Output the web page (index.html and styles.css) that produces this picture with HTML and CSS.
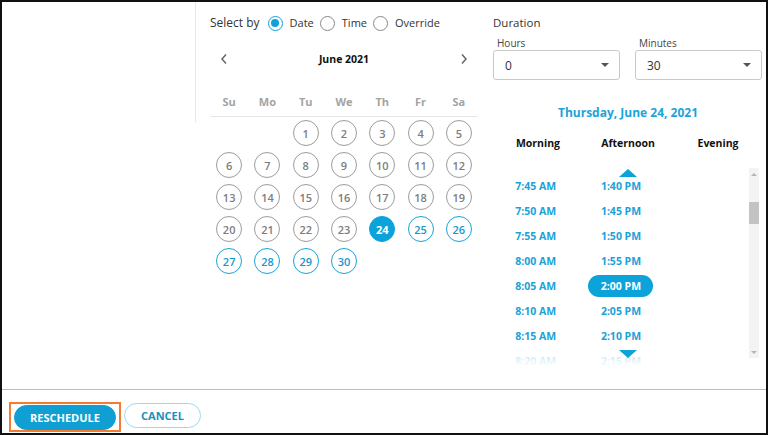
FILE: index.html
```html
<!DOCTYPE html>
<html lang="en">
<head>
<meta charset="utf-8">
<title>Reschedule</title>
<link rel="stylesheet" href="styles.css">
</head>
<body>
<div class="frame">
  <div class="main">
    <div class="side"></div>
    <div class="cal">
      <div class="select-by">
        <span class="sb-label">Select by</span>
        <span class="radio on"></span><span class="r-label">Date</span>
        <span class="radio"></span><span class="r-label">Time</span>
        <span class="radio"></span><span class="r-label">Override</span>
      </div>
      <div class="month">
        <svg class="chev" width="8" height="12" viewBox="0 0 8 12"><path d="M6 1.5 L2 6 L6 10.5" fill="none" stroke="#666" stroke-width="1.5"/></svg>
        <span class="month-title">June 2021</span>
        <svg class="chev" width="8" height="12" viewBox="0 0 8 12"><path d="M2 1.5 L6 6 L2 10.5" fill="none" stroke="#666" stroke-width="1.5"/></svg>
      </div>
      <div class="weekdays">
        <span>Su</span><span>Mo</span><span>Tu</span><span>We</span><span>Th</span><span>Fr</span><span>Sa</span>
      </div>
      <div class="days">
        <span class="day empty"></span><span class="day empty"></span>
        <span class="day"><i>1</i></span><span class="day"><i>2</i></span><span class="day"><i>3</i></span><span class="day"><i>4</i></span><span class="day"><i>5</i></span>
        <span class="day"><i>6</i></span><span class="day"><i>7</i></span><span class="day"><i>8</i></span><span class="day"><i>9</i></span><span class="day"><i>10</i></span><span class="day"><i>11</i></span><span class="day"><i>12</i></span>
        <span class="day"><i>13</i></span><span class="day"><i>14</i></span><span class="day"><i>15</i></span><span class="day"><i>16</i></span><span class="day"><i>17</i></span><span class="day"><i>18</i></span><span class="day"><i>19</i></span>
        <span class="day"><i>20</i></span><span class="day"><i>21</i></span><span class="day"><i>22</i></span><span class="day"><i>23</i></span><span class="day sel"><i>24</i></span><span class="day avail"><i>25</i></span><span class="day avail"><i>26</i></span>
        <span class="day avail"><i>27</i></span><span class="day avail"><i>28</i></span><span class="day avail"><i>29</i></span><span class="day avail"><i>30</i></span>
      </div>
    </div>
    <div class="right">
      <div class="dur-title">Duration</div>
      <div class="dur-fields">
        <div class="field">
          <div class="f-label">Hours</div>
          <div class="select"><span>0</span><span class="caret"></span></div>
        </div>
        <div class="field">
          <div class="f-label">Minutes</div>
          <div class="select"><span>30</span><span class="caret"></span></div>
        </div>
      </div>
      <div class="date-title">Thursday, June 24, 2021</div>
      <div class="periods"><span>Morning</span><span>Afternoon</span><span>Evening</span></div>
      <div class="slots">
        <div class="slot-list">
          <div class="slot-row"><span>7:45 AM</span><span>1:40 PM</span><span></span></div>
          <div class="slot-row"><span>7:50 AM</span><span>1:45 PM</span><span></span></div>
          <div class="slot-row"><span>7:55 AM</span><span>1:50 PM</span><span></span></div>
          <div class="slot-row"><span>8:00 AM</span><span>1:55 PM</span><span></span></div>
          <div class="slot-row"><span>8:05 AM</span><span class="pill">2:00 PM</span><span></span></div>
          <div class="slot-row"><span>8:10 AM</span><span>2:05 PM</span><span></span></div>
          <div class="slot-row"><span>8:15 AM</span><span>2:10 PM</span><span></span></div>
          <div class="slot-row last"><span>8:20 AM</span><span>2:15 PM</span><span></span></div>
          <div class="fade"></div>
        </div>
        <div class="scrollbar">
          <div class="sb-btn"><span class="sb-up"></span></div>
          <div class="sb-track"><div class="sb-thumb"></div></div>
          <div class="sb-btn"><span class="sb-down"></span></div>
        </div>
        <span class="arrow up"></span>
        <span class="arrow down"></span>
      </div>
    </div>
  </div>
  <div class="footer">
    <span class="focus-ring"><button class="btn primary">RESCHEDULE</button></span>
    <button class="btn secondary">CANCEL</button>
  </div>
</div>
</body>
</html>
```

FILE: styles.css
```css
* { box-sizing: border-box; }
html, body { margin: 0; padding: 0; background: #fff; }
body { font-family: "Open Sans", "Noto Sans", sans-serif; color: #333; }

.frame {
  width: 768px;
  height: 435px;
  border: 2px solid #111;
  display: flex;
  flex-direction: column;
  overflow: hidden;
}

.main {
  display: flex;
  height: 387px;
  flex: none;
}

.side {
  width: 194px;
  height: 120px;
  border-right: 1px solid #e8e8e8;
  flex: none;
}

.cal {
  width: 268px;
  margin-left: 14px;
  flex: none;
}

.select-by {
  margin-top: 12px;
  height: 18px;
  display: flex;
  align-items: center;
  font-size: 12px;
  line-height: 18px;
  color: #333;
}
.sb-label { margin-right: 8px; }
.radio {
  width: 15px;
  height: 15px;
  border: 1px solid #888;
  border-radius: 50%;
  margin-right: 7px;
  flex: none;
  display: inline-flex;
  align-items: center;
  justify-content: center;
}
.radio.on { border: 1.5px solid #0ea2d8; }
.radio.on::after {
  content: "";
  width: 8px;
  height: 8px;
  border-radius: 50%;
  background: #0ea2d8;
}
.r-label { margin-right: 6px; font-size: 11px; }

.month {
  margin-top: 15px;
  height: 24px;
  display: flex;
  align-items: center;
  justify-content: space-between;
  padding: 0 10px;
}
.month-title {
  font-size: 10.5px;
  font-weight: 700;
  color: #111;
}

.weekdays {
  margin-top: 21px;
  height: 25px;
  padding-bottom: 4px;
  border-bottom: 1px solid #e6e6e6;
  display: grid;
  grid-template-columns: repeat(7, 1fr);
  font-size: 11px;
  font-weight: 700;
  color: #a3a3a3;
  line-height: 20px;
  text-align: center;
}

.days {
  display: grid;
  grid-template-columns: repeat(7, 1fr);
  grid-auto-rows: 32px;
}
.day {
  display: flex;
  align-items: center;
  justify-content: center;
}
.day i {
  font-style: normal;
  width: 26px;
  height: 26px;
  border: 1px solid #9c9c9c;
  border-radius: 50%;
  display: flex;
  align-items: center;
  justify-content: center;
  font-size: 11px;
  font-weight: 600;
  color: #7d7d7d;
}
.day.avail i { border-color: #17a3d9; color: #1598cc; border-width: 1.3px; }
.day.sel i { background: #0ba3d9; border-color: #0ba3d9; color: #fff; font-weight: 700; }

.right {
  width: 270px;
  margin-left: 15px;
  flex: none;
}
.dur-title {
  margin-top: 11px;
  font-size: 11.5px;
  line-height: 20px;
  color: #333;
}
.dur-fields {
  display: flex;
  gap: 15px;
  margin-top: 3px;
}
.field { width: 127px; }
.f-label {
  font-size: 10px;
  line-height: 14px;
  padding-left: 4px;
  color: #444;
}
.select {
  height: 30px;
  border: 1px solid #c9c9c9;
  border-radius: 3px;
  display: flex;
  align-items: center;
  justify-content: space-between;
  padding: 0 10px 0 11px;
  font-size: 12px;
  color: #333;
}
.caret {
  width: 0;
  height: 0;
  border-left: 4px solid transparent;
  border-right: 4px solid transparent;
  border-top: 4px solid #555;
}

.date-title {
  margin-top: 24px;
  text-align: center;
  font-size: 12px;
  font-weight: 700;
  line-height: 18px;
  color: #1ba3da;
}
.periods {
  margin-top: 12px;
  display: grid;
  grid-template-columns: repeat(3, 1fr);
  text-align: center;
  font-size: 10.5px;
  font-weight: 700;
  line-height: 18px;
  color: #111;
}

.slots {
  position: relative;
  margin-top: 16px;
  height: 203px;
  display: flex;
  align-items: flex-start;
}
.slot-list {
  position: relative;
  width: 256px;
  height: 203px;
  overflow: hidden;
  padding-top: 5px;
}
.slot-row {
  display: grid;
  grid-template-columns: repeat(3, 1fr);
  height: 25px;
  align-items: center;
  justify-items: center;
  font-size: 10.5px;
  font-weight: 700;
  line-height: 14px;
  color: #1aa2d9;
}
.pill {
  width: 65px;
  height: 22px;
  border-radius: 11px;
  background: #0ba3d9;
  color: #fff;
  display: flex;
  align-items: center;
  justify-content: center;
}
.fade {
  position: absolute;
  left: 0;
  right: 0;
  bottom: 0;
  height: 30px;
  background: linear-gradient(rgba(255,255,255,0), rgba(255,255,255,0.8) 55%, #fff 85%);
}

.scrollbar {
  width: 10px;
  height: 190px;
  background: #f3f3f3;
  display: flex;
  flex-direction: column;
}
.sb-btn {
  height: 12px;
  display: flex;
  align-items: center;
  justify-content: center;
}
.sb-up, .sb-down {
  width: 0;
  height: 0;
  border-left: 3px solid transparent;
  border-right: 3px solid transparent;
}
.sb-up { border-bottom: 3px solid #b5b5b5; }
.sb-down { border-top: 3px solid #b5b5b5; }
.sb-track { flex: 1; }
.sb-thumb {
  margin-top: 22px;
  height: 22px;
  background: #c3c3c3;
}

.arrow {
  position: absolute;
  left: 126px;
  width: 0;
  height: 0;
  border-left: 9px solid transparent;
  border-right: 9px solid transparent;
}
.arrow.up { top: 1px; border-bottom: 8px solid #0ba3d9; }
.arrow.down { top: 182px; border-top: 8px solid #0ba3d9; }

.footer {
  flex: 1;
  border-top: 1px solid #86cfea;
  padding: 12px 0 0 7px;
  display: flex;
  align-items: flex-start;
  gap: 3px;
}
.focus-ring {
  display: inline-flex;
  border: 2px solid #f47b2f;
  padding: 1px 3px 0;
}
.btn {
  height: 25px;
  border-radius: 13px;
  font-family: "Open Sans", "Noto Sans", sans-serif;
  font-size: 11px;
  font-weight: 700;
  padding: 0;
  cursor: pointer;
}
.btn.primary {
  width: 102px;
  background: #0f9fd2;
  border: 1px solid #0f9fd2;
  color: #fff;
}
.btn.secondary {
  width: 77px;
  margin-top: 1px;
  background: #fff;
  border: 1px solid #9fd8ee;
  color: #1a8fbf;
}
```
